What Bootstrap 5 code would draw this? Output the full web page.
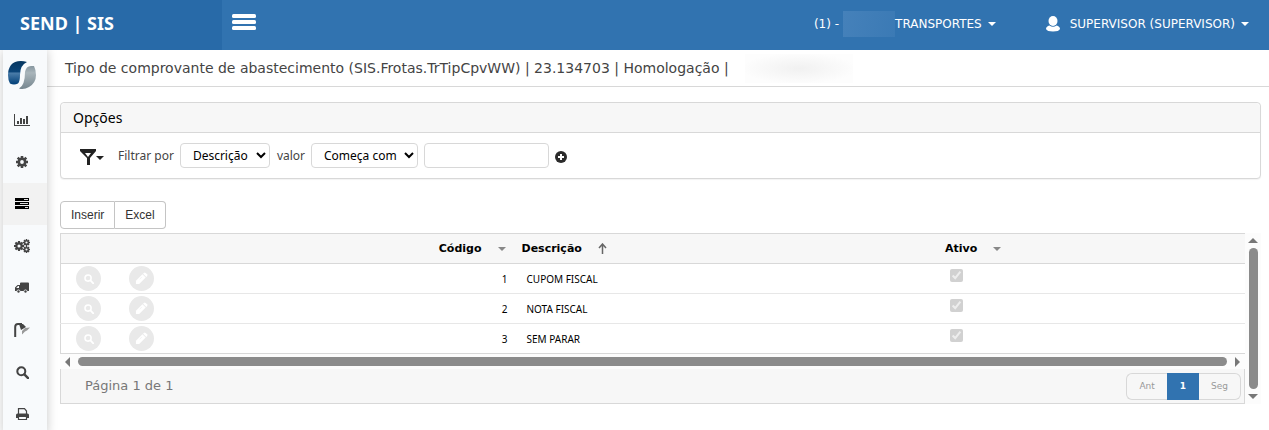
<!DOCTYPE html>
<html lang="pt-BR">
<head>
<meta charset="utf-8">
<meta name="viewport" content="width=device-width, initial-scale=1">
<title>SEND | SIS - Tipo de comprovante de abastecimento</title>
<link href="https://cdn.jsdelivr.net/npm/bootstrap@5.3.0/dist/css/bootstrap.min.css" rel="stylesheet">
<style>
  :root { --line: #d8d8d8; --head: #f7f7f7; --blue: #3173b0; }
  body { font-family: "DejaVu Sans", Verdana, sans-serif; font-size: 12px; line-height: 16px; color: #444; background: #fff; }
  svg { display: block; }
  .topbar { background: var(--blue); height: 50px; z-index: 3; }
  .topbar a { color: #fff; text-decoration: none; }
  .brand-box { width: 222px; background: #286aa8; font: 18px/24px "Noto Sans", Tahoma, sans-serif; padding: 0 20px 4px; }
  .menu-btn { padding: 0 10px 6px; border: 0; background: none; color: #fff; }
  .top-links { gap: 50px; padding: 0 20px 3px 0; }
  .top-links a { gap: 6px; }
  .caret-down { border: 4px solid transparent; border-top-color: currentColor; border-bottom: 0; display: inline-block; }
  .redacted-top { width: 52px; height: 26px; background: linear-gradient(100deg, #4581ba, #3b7ab5); }
  .redacted-title { width: 108px; height: 29px; background: radial-gradient(ellipse at 50% 50%, #f1f1f1, #fdfdfd 75%); }
  .side { width: 44px; margin-left: 3px; background: #f8fafc; box-shadow: 0 0 10px rgba(0,0,0,.22); z-index: 2; }
  .side a { height: 42px; color: #444; padding-right: 6px; }
  .side a.logo { height: 49px; }
  .side a.current { background: #f2f2f2; color: #000; }
  .page-title { height: 37px; padding-left: 18px; border-bottom: 1px solid var(--line); font-size: 14px; font-weight: 400; color: #444; }
  .content-area { padding: 15px 8px 0 13px; }
  .card { border-color: var(--line); border-radius: 4px; box-shadow: 0 1px 1px rgba(0,0,0,.05); }
  .card-header { background: var(--head); border-color: var(--line); padding: 4px 12px; font: 14px/21px "Noto Sans", sans-serif; color: #000; }
  .filter-row { padding: 10px 18px; gap: 6px; font: 12px/16px "Noto Sans", sans-serif; color: #444; }
  .filter-row label { padding-left: 1px; }
  .filter-row button { border: 0; background: none; padding: 2px 0 0; color: #222; }
  .filter-row .filter-btn { padding: 4px 0 0 1px; margin-right: 7px; }
  .filter-row select, .filter-row input { height: 25px; border: 1px solid var(--line); border-radius: 4px; background: #fff; color: #000; font-size: 12px; }
  .filter-row select { padding: 0 0 0 8px; }
  .sel-field { width: 90px; } .sel-op { width: 107px; } .filter-row input { width: 125px; }
  .tools { margin-top: 22px; }
  .tool-btn { font: 12px/18px "Liberation Sans", Arial, sans-serif; color: #333; border: 1px solid #c4c4c4; padding: 4px 10px; border-radius: 4px; background: #fff; }
  .grid-table { table-layout: fixed; border: 1px solid var(--line); border-right: 0; color: #000; }
  .grid-table th { height: 30px; background: var(--head); border-bottom: 1px solid var(--line); font-size: 11px; padding: 0 8px; }
  .grid-table td { height: 30px; border-bottom: 1px solid #e7e7e7; font: 10px/16px "Noto Sans", sans-serif; padding: 0 13px; }
  .grid-table tr:last-child td { border-bottom: 0; }
  .grid-table .act { padding: 0; }
  .grid-table .num { padding: 0 6px; }
  .c-view { width: 56px; } .c-edit { width: 50px; } .c-code { width: 347px; } .c-active { width: 26%; }
  .grid-table .caret-down { color: #888; vertical-align: middle; margin-left: 16px; }
  .grid-table input { width: 13px; height: 13px; margin: 0 0 6px; display: block; }
  .round-btn { width: 25px; height: 25px; border: 0; padding: 0; border-radius: 50%; background: #e9e9e9; color: #fff; }
  .bar-h { height: 15px; padding: 0 5px; gap: 4px; background: #fcfcfc; }
  .bar-v { width: 16px; flex-shrink: 0; padding: 5px 0; gap: 5px; background: #fcfcfc; }
  .bar-h i, .bar-v i { background: #8b8b8b; border-radius: 5px; }
  .bar-h i { height: 9px; } .bar-v i { width: 9px; }
  .arr { border: 5px solid transparent; }
  .arr-l { border-right-color: #777; border-left: 0; } .arr-r { border-left-color: #777; border-right: 0; }
  .arr-u { border-bottom-color: #777; border-top: 0; } .arr-d { border-top-color: #777; border-bottom: 0; }
  .grid-foot { height: 35px; background: var(--head); border: 1px solid var(--line); border-top: 0; padding: 0 3px 0 24px; color: #777; font-size: 13px; }
  .pager button { font: 9px/25px "DejaVu Sans", sans-serif; height: 27px; color: #999; border: 1px solid var(--line); background: var(--head); padding: 0 12px; }
  .pager button.on { background: var(--blue); border-color: var(--blue); color: #fff; font-weight: 700; }
</style>
</head>
<body class="min-vh-100 d-flex flex-column overflow-hidden">
<svg class="d-none">
  <symbol id="lens" viewBox="0 0 14 14"><circle cx="5.7" cy="5.7" r="4.3" fill="none" stroke="currentColor" stroke-width="2.2"/><path d="M9 9l4 4" stroke="currentColor" stroke-width="2.6" stroke-linecap="round"/></symbol>
  <symbol id="pencil" viewBox="0 0 14 14"><path d="M1 9.500L8 2.500l3.500 3.500-7 7H1z" fill="currentColor"/><path d="M8.700 1.800l.8-.8q1-.8 2 0l1.500 1.500q.8 1 0 2l-.8.8z" fill="currentColor"/><path d="M5 7.800l2.500-2.500" stroke="#e9e9e9" stroke-width=".6"/></symbol>
  <symbol id="gear" viewBox="0 0 14 14"><circle cx="7" cy="7" r="3.7" fill="none" stroke="currentColor" stroke-width="3"/><path d="M7 0v3M7 11v3M0 7h3M11 7h3M2 2l2 2M10 10l2 2M2 12l2-2M10 4l2-2" stroke="currentColor" stroke-width="3"/></symbol>
</svg>
<header class="topbar d-flex position-relative">
  <a href="#" class="brand-box d-flex align-items-center fw-bold">SEND | SIS</a>
  <button class="menu-btn d-flex align-items-center" aria-label="Menu"><svg width="24" height="16" fill="currentColor"><rect y="0" width="24" height="4" rx="1.500"/><rect y="6" width="24" height="4" rx="1.500"/><rect y="12" width="24" height="4" rx="1.500"/></svg></button>
  <nav class="top-links d-flex align-items-center ms-auto">
    <a href="#" class="d-flex align-items-center"><span class="d-flex align-items-center">(1) -<span class="redacted-top ms-1"></span>TRANSPORTES</span><span class="caret-down"></span></a>
    <a href="#" class="d-flex align-items-center"><svg class="me-1" width="14" height="16" fill="#fff"><ellipse cx="7" cy="5" rx="4.500" ry="5"/><path d="M0 13q0-2.500 3.500-3.500Q7 12 10.500 9.500 14 10.500 14 13q-1 2.500-7 2.500T0 13z"/></svg>SUPERVISOR (SUPERVISOR)<span class="caret-down"></span></a>
  </nav>
</header>
<div class="d-flex flex-grow-1">
  <nav class="side position-relative flex-shrink-0">
    <a href="#" class="logo d-flex align-items-center justify-content-center" aria-label="Início"><svg width="28" height="28" viewBox="0 0 28 28"><defs><linearGradient id="lb" x2="0" y2="1"><stop stop-color="#06365f"/><stop offset=".45" stop-color="#0b4478"/><stop offset=".52" stop-color="#4a7ba8"/><stop offset="1" stop-color="#003f78"/></linearGradient><linearGradient id="lg" x2="0" y2="1"><stop stop-color="#8797a0"/><stop offset=".3" stop-color="#a9b5bb"/><stop offset="1" stop-color="#76868f"/></linearGradient></defs><path d="M19 1C13-1 6 0 3 4Q0 8 0 14q0 5 2 8.500 4 2 8 0 2-2 2-8.500Q12 4 19 1z" fill="url(#lb)"/><path d="M17 11q1-6 6-6h3q2 4 2 9 0 8-7 12-5 3-10 1.500 6-3 6-16.500z" fill="url(#lg)"/></svg></a>
    <a href="#" class="d-flex align-items-center justify-content-center" aria-label="Gráficos"><svg width="16" height="12" fill="currentColor"><path d="M0 0h1v11h15v1H0zM3 7h2v3H3zM6 4h2v6H6zM9 5h2v5H9zM12 2h2v8h-2z"/></svg></a>
    <a href="#" class="d-flex align-items-center justify-content-center" aria-label="Configuração"><svg width="12" height="12"><use href="#gear"/></svg></a>
    <a href="#" class="current d-flex align-items-center justify-content-center" aria-label="Cadastros"><svg width="14" height="12"><path d="M0 0h14v3H0zM0 4h14v3H0zM0 8h14v3H0z"/><path d="M9 1.500h4M5 5.500h8M10 9.500h3" stroke="#ddd"/></svg></a>
    <a href="#" class="d-flex align-items-center justify-content-center" aria-label="Processos"><svg width="16" height="14"><use href="#gear" y="2" width="10" height="10"/><use href="#gear" x="9" y="0" width="7" height="7"/><use href="#gear" x="9" y="7" width="7" height="7"/></svg></a>
    <a href="#" class="d-flex align-items-center justify-content-center" aria-label="Frota"><svg width="14" height="12" fill="currentColor"><path fill-rule="evenodd" d="M5 1.500Q5 .500 6 .500h7q1 0 1 1V9H0V5.500L2.500 3H5zM4 4H3L1.200 6H4z"/><circle cx="3.500" cy="9.500" r="1.600" stroke="#f8fafc" stroke-width=".8"/><circle cx="10.500" cy="9.500" r="1.600" stroke="#f8fafc" stroke-width=".8"/></svg></a>
    <a href="#" class="d-flex align-items-center justify-content-center" aria-label="Abastecimento"><svg width="17" height="15"><path d="M1.200 14V4Q1.200 1 4 1h4" fill="none" stroke="#444" stroke-width="2"/><path d="M5 1h4l3 3-5 3z" fill="#444"/><path d="M8 8l3-3 5-.5-3 3-2 1-3 3v-3z" fill="#999"/></svg></a>
    <a href="#" class="d-flex align-items-center justify-content-center" aria-label="Pesquisar"><svg width="13" height="13"><use href="#lens"/></svg></a>
    <a href="#" class="d-flex align-items-center justify-content-center" aria-label="Imprimir"><svg width="13" height="12" fill="none" stroke="currentColor"><path d="M2.500 6V.700h6L10.500 3v3M2.500 8.500h8v3h-8z" stroke-width="1.200"/><path fill="currentColor" stroke="none" d="M0 7q0-1.500 1.500-1.500h10Q13 5.500 13 7v3h-2V8H2v2H0z"/></svg></a>
  </nav>
  <main class="flex-grow-1">
    <h1 class="page-title d-flex align-items-center m-0">Tipo de comprovante de abastecimento (SIS.Frotas.TrTipCpvWW) | 23.134703 | Homologação |<span class="redacted-title ms-3"></span></h1>
    <div class="content-area">
      <section class="card">
        <div class="card-header">Opções</div>
        <form class="filter-row d-flex align-items-center">
          <button type="button" class="filter-btn d-flex align-items-center" aria-label="Filtros"><svg width="16" height="17" fill="currentColor"><path fill-rule="evenodd" d="M0 0h16v2l-6 7v7H7V9L0 2zM5 4l3 4 3-4z"/></svg><span class="caret-down"></span></button>
          <label for="campo">Filtrar por</label>
          <select id="campo" class="sel-field"><option>Descrição</option></select>
          <label for="op">valor</label>
          <select id="op" class="sel-op"><option>Começa com</option></select>
          <input type="text" aria-label="Valor do filtro">
          <button type="button" aria-label="Adicionar filtro"><svg width="12" height="12"><circle cx="6" cy="6" r="6" fill="#2b2b2b"/><path d="M6 3v6M3 6h6" stroke="#fff" stroke-width="2"/></svg></button>
        </form>
      </section>
      <div class="tools d-flex">
        <button class="tool-btn rounded-end-0">Inserir</button><button class="tool-btn rounded-start-0 border-start-0">Excel</button>
      </div>
      <div class="d-flex mt-1">
        <div class="flex-grow-1">
          <table class="grid-table w-100">
            <colgroup><col class="c-view"><col class="c-edit"><col class="c-code"><col><col class="c-active"></colgroup>
            <thead><tr><th></th><th></th><th class="text-end">Código<span class="caret-down"></span></th><th>Descrição<svg class="d-inline-block ms-3" width="9" height="11" fill="none" stroke="#666" stroke-width="1.500"><path d="M4.500 11V1M1 5l3.500-4L8 5"/></svg></th><th>Ativo<span class="caret-down"></span></th></tr></thead>
            <tbody>
              <tr><td class="act"><button class="round-btn d-flex align-items-center justify-content-center mx-auto" disabled aria-label="Consultar"><svg width="10" height="10"><use href="#lens"/></svg></button></td><td class="act"><button class="round-btn d-flex align-items-center justify-content-center mx-auto" disabled aria-label="Editar"><svg width="13" height="13"><use href="#pencil"/></svg></button></td><td class="num text-end">1</td><td>CUPOM FISCAL</td><td><input type="checkbox" checked disabled aria-label="Ativo"></td></tr>
              <tr><td class="act"><button class="round-btn d-flex align-items-center justify-content-center mx-auto" disabled aria-label="Consultar"><svg width="10" height="10"><use href="#lens"/></svg></button></td><td class="act"><button class="round-btn d-flex align-items-center justify-content-center mx-auto" disabled aria-label="Editar"><svg width="13" height="13"><use href="#pencil"/></svg></button></td><td class="num text-end">2</td><td>NOTA FISCAL</td><td><input type="checkbox" checked disabled aria-label="Ativo"></td></tr>
              <tr><td class="act"><button class="round-btn d-flex align-items-center justify-content-center mx-auto" disabled aria-label="Consultar"><svg width="10" height="10"><use href="#lens"/></svg></button></td><td class="act"><button class="round-btn d-flex align-items-center justify-content-center mx-auto" disabled aria-label="Editar"><svg width="13" height="13"><use href="#pencil"/></svg></button></td><td class="num text-end">3</td><td>SEM PARAR</td><td><input type="checkbox" checked disabled aria-label="Ativo"></td></tr>
            </tbody>
          </table>
          <div class="bar-h d-flex align-items-center"><span class="arr arr-l"></span><i class="flex-grow-1 mx-1"></i><span class="arr arr-r"></span></div>
          <div class="grid-foot d-flex align-items-center justify-content-between">
            <span>Página 1 de 1</span>
            <div class="pager d-flex"><button class="rounded-start border-end-0">Ant</button><button class="on">1</button><button class="rounded-end border-start-0">Seg</button></div>
          </div>
        </div>
        <div class="bar-v d-flex flex-column align-items-center"><span class="arr arr-u"></span><i class="flex-grow-1"></i><span class="arr arr-d"></span></div>
      </div>
    </div>
  </main>
</div>
<script src="https://cdn.jsdelivr.net/npm/bootstrap@5.3.0/dist/js/bootstrap.bundle.min.js"></script>
</body>
</html>
